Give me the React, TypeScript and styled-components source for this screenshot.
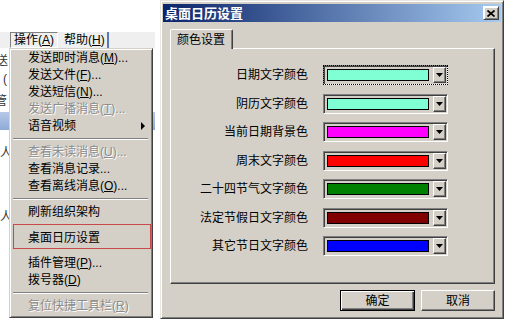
import React from "react";
import styled, { createGlobalStyle, css } from "styled-components";

const GlobalStyle = createGlobalStyle`
  html, body { margin: 0; padding: 0; background: #fff; }
  body {
    width: 521px; height: 334px; overflow: hidden;
    font-family: "Liberation Sans", "Noto Sans CJK SC", sans-serif;
    font-size: 12px; color: #000;
  }
  * { box-sizing: border-box; }
`;

const raised = css`
  border: 1px solid;
  border-color: #d4d0c8 #404040 #404040 #d4d0c8;
  box-shadow: inset 1px 1px #fff, inset -1px -1px #808080;
`;

const Desktop = styled.div`
  position: relative;
  width: 521px;
  height: 334px;
  overflow: hidden;
  background: #fff;
`;

/* ---------- background application (behind the menu) ---------- */
const BackWindow = styled.div`
  position: absolute;
  left: 0;
  top: 32px;
  width: 155px;
  height: 290px;
  display: flex;
  flex-direction: column;
  background: #fff;
  overflow: hidden;
`;

const MenuBar = styled.div`
  height: 16px;
  flex: none;
  display: flex;
  align-items: stretch;
  gap: 2px;
  padding-left: 10px;
  background: #efefef;
`;

const MenuTitle = styled.div<{ $pressed?: boolean; $w: number }>`
  width: ${(p) => p.$w}px;
  display: flex;
  align-items: center;
  padding: 0 3px;
  line-height: 14px;
  white-space: nowrap;
  border: 1px solid transparent;
  ${(p) => p.$pressed && css`border-color: #808080 #fff #fff #808080;`}
`;

const BarDivider = styled.div`
  width: 2px;
  background: #5a78b8;
`;

const BackList = styled.div`
  display: flex;
  flex-direction: column;
`;

const BackRow = styled.div<{ $h: number; $band?: boolean }>`
  height: ${(p) => p.$h}px;
  display: flex;
  align-items: center;
  color: #333;
  white-space: nowrap;
  ${(p) => p.$band && css`background: linear-gradient(#b7c9e8, #8eaad8);`}
`;

const Peek = styled.span<{ $shift: number }>`
  margin-left: ${(p) => p.$shift}px;
`;

/* ---------- popup menu ---------- */
const Menu = styled.div`
  position: absolute;
  left: 9px;
  top: 48px;
  width: 144px;
  height: 270px;
  background: #d4d0c8;
  ${raised};
  padding: 0 1px 3px 1px;
  display: flex;
  flex-direction: column;
`;

const MenuItem = styled.div<{ $disabled?: boolean }>`
  height: 17px;
  flex: none;
  display: flex;
  align-items: center;
  padding-left: 17px;
  white-space: nowrap;
  line-height: 1;
  color: #000;
  ${(p) =>
    p.$disabled &&
    css`
      color: #8c8c8c;
      text-shadow: 1px 1px 0 #fff;
    `}
`;

const SubArrow = styled.span`
  margin-left: auto;
  margin-right: 6px;
  width: 0;
  height: 0;
  border-top: 4px solid transparent;
  border-bottom: 4px solid transparent;
  border-left: 4px solid #000;
`;

const Separator = styled.div`
  height: 9px;
  flex: none;
  display: flex;
  align-items: center;
  padding: 0 3px 0 2px;
  &::before {
    content: "";
    width: 100%;
    border-top: 1px solid #808080;
    border-bottom: 1px solid #fff;
  }
`;

const MarkedSlot = styled.div`
  height: 34px;
  flex: none;
  padding: 4px 0 5px 2px;
  display: flex;
`;

const MarkedItem = styled.div`
  flex: 1;
  display: flex;
  align-items: center;
  padding-left: 14px;
  border: 1px solid #c94848;
  white-space: nowrap;
`;

/* ---------- dialog ---------- */
const Dialog = styled.div`
  position: absolute;
  left: 160px;
  top: 0;
  width: 344px;
  height: 319px;
  background: #d4d0c8;
  ${raised};
  border-color: #e8e6e0 #404040 #404040 #e8e6e0;
  padding: 3px 2px 2px 2px;
  display: flex;
  flex-direction: column;
`;

const TitleBar = styled.div`
  height: 18px;
  flex: none;
  display: flex;
  align-items: center;
  padding: 0 2px;
  background: linear-gradient(to right, #0a246a, #a6caf0);
`;

const TitleText = styled.span`
  color: #fff;
  font-weight: bold;
  font-size: 13px;
  line-height: 1;
`;

const CloseButton = styled.div`
  margin-left: auto;
  width: 16px;
  height: 14px;
  background: #d4d0c8;
  ${raised};
  border-color: #fff #404040 #404040 #fff;
  display: flex;
  align-items: center;
  justify-content: center;
`;

const DialogBody = styled.div`
  flex: 1;
  display: flex;
  flex-direction: column;
  padding: 7px 6px 0 7px;
`;

const TabStrip = styled.div`
  height: 19px;
  flex: none;
  display: flex;
  align-items: flex-start;
`;

const Tab = styled.div`
  position: relative;
  z-index: 1;
  width: 63px;
  height: 20px;
  padding-left: 6px;
  display: flex;
  align-items: center;
  background: #d4d0c8;
  border-top: 1px solid #fff;
  border-left: 1px solid #fff;
  border-right: 1px solid #404040;
  border-radius: 2px 2px 0 0;
  box-shadow: inset -1px 0 #808080;
  line-height: 1;
`;

const Panel = styled.div`
  height: 236px;
  flex: none;
  border: 1px solid;
  border-color: #fff #404040 #404040 #fff;
  box-shadow: inset -1px -1px #808080;
  padding-top: 16px;
`;

const Grid = styled.div`
  display: grid;
  grid-template-columns: 137px 125px;
  column-gap: 15px;
  grid-auto-rows: 20px;
  row-gap: 8.5px;
  align-items: center;
`;

const Label = styled.div`
  text-align: right;
  white-space: nowrap;
  line-height: 1;
`;

const Combo = styled.div<{ $focused?: boolean }>`
  width: 125px;
  height: 20px;
  border: 1px solid;
  border-color: #808080 #fff #fff #808080;
  box-shadow: inset 1px 1px #404040, inset -1px -1px #d4d0c8;
  padding: 1px;
  display: flex;
  align-items: center;
  background: #d4d0c8;
  ${(p) =>
    p.$focused &&
    css`
      outline: 1px dotted #000;
      outline-offset: -1px;
    `}
`;

const Swatch = styled.div<{ $color: string }>`
  flex: 1;
  height: 12px;
  margin-left: 2px;
  border: 1px solid #000;
  background: ${(p) => p.$color};
`;

const DropButton = styled.div`
  width: 13px;
  height: 16px;
  margin-left: 4px;
  background: #d4d0c8;
  border: 1px solid;
  border-color: #fff #404040 #404040 #fff;
  box-shadow: inset -1px -1px #808080;
  display: flex;
  align-items: center;
  justify-content: center;
`;

const ButtonRow = styled.div`
  margin-top: 6px;
  display: flex;
  justify-content: flex-end;
  gap: 6px;
`;

const Button = styled.div<{ $default?: boolean; $w: number }>`
  width: ${(p) => p.$w}px;
  height: 21px;
  display: flex;
  align-items: center;
  justify-content: center;
  line-height: 1;
  background: #d4d0c8;
  ${(p) =>
    p.$default
      ? css`
          border: 1px solid #000;
          box-shadow: inset 1px 1px #fff, inset -1px -1px #404040, inset -2px -2px #808080;
        `
      : css`
          border: 1px solid;
          border-color: #fff #404040 #404040 #fff;
          box-shadow: inset -1px -1px #808080;
        `}
`;

const ArrowDown = () => (
  <svg width="7" height="4" viewBox="0 0 7 4">
    <polygon points="0,0 7,0 3.5,4" fill="#000" />
  </svg>
);

const CloseGlyph = () => (
  <svg width="8" height="7" viewBox="0 0 8 7">
    <path d="M0.5 0.5 L7.5 6.5 M7.5 0.5 L0.5 6.5" stroke="#000" strokeWidth="1.7" />
  </svg>
);

type Entry =
  | { kind: "item"; text: string; key?: string; tail?: string; disabled?: boolean; sub?: boolean }
  | { kind: "sep" }
  | { kind: "marked"; text: string };

const menuEntries: Entry[] = [
  { kind: "item", text: "发送即时消息(", key: "M", tail: ")..." },
  { kind: "item", text: "发送文件(", key: "F", tail: ")..." },
  { kind: "item", text: "发送短信(", key: "N", tail: ")..." },
  { kind: "item", text: "发送广播消息(", key: "T", tail: ")...", disabled: true },
  { kind: "item", text: "语音视频", sub: true },
  { kind: "sep" },
  { kind: "item", text: "查看未读消息(", key: "U", tail: ")...", disabled: true },
  { kind: "item", text: "查看消息记录..." },
  { kind: "item", text: "查看离线消息(", key: "O", tail: ")..." },
  { kind: "sep" },
  { kind: "item", text: "刷新组织架构" },
  { kind: "marked", text: "桌面日历设置" },
  { kind: "item", text: "插件管理(", key: "P", tail: ")..." },
  { kind: "item", text: "拨号器(", key: "D", tail: ")" },
  { kind: "sep" },
  { kind: "item", text: "复位快捷工具栏(", key: "R", tail: ")", disabled: true },
];

const colorRows = [
  { label: "日期文字颜色", color: "#80ffd4" },
  { label: "阴历文字颜色", color: "#80ffd4" },
  { label: "当前日期背景色", color: "#ff00ff" },
  { label: "周末文字颜色", color: "#ff0000" },
  { label: "二十四节气文字颜色", color: "#008000" },
  { label: "法定节假日文字颜色", color: "#800000" },
  { label: "其它节日文字颜色", color: "#0000ff" },
];

export default function App() {
  return (
    <>
      <GlobalStyle />
      <Desktop>
        <BackWindow>
          <MenuBar>
            <MenuTitle $pressed $w={48}>
              操作(<u>A</u>)
            </MenuTitle>
            <MenuTitle $w={45}>
              帮助(<u>H</u>)
            </MenuTitle>
            <BarDivider />
          </MenuBar>
          <BackList>
            <BackRow $h={4} />
            <BackRow $h={14}>
              <Peek $shift={-4}>送</Peek>
            </BackRow>
            <BackRow $h={6} />
            <BackRow $h={14}>
              <Peek $shift={3}>(</Peek>
            </BackRow>
            <BackRow $h={6} />
            <BackRow $h={14}>
              <Peek $shift={-5}>管</Peek>
            </BackRow>
            <BackRow $h={6} />
            <BackRow $h={18} $band />
            <BackRow $h={14} />
            <BackRow $h={14}>
              <Peek $shift={0}>人</Peek>
            </BackRow>
            <BackRow $h={50} />
            <BackRow $h={14}>
              <Peek $shift={0}>人</Peek>
            </BackRow>
          </BackList>
        </BackWindow>

        <Menu>
          {menuEntries.map((e, i) => {
            if (e.kind === "sep") return <Separator key={i} />;
            if (e.kind === "marked")
              return (
                <MarkedSlot key={i}>
                  <MarkedItem>{e.text}</MarkedItem>
                </MarkedSlot>
              );
            return (
              <MenuItem key={i} $disabled={e.disabled}>
                {e.text}
                {e.key && <u>{e.key}</u>}
                {e.tail}
                {e.sub && <SubArrow />}
              </MenuItem>
            );
          })}
        </Menu>

        <Dialog>
          <TitleBar>
            <TitleText>桌面日历设置</TitleText>
            <CloseButton>
              <CloseGlyph />
            </CloseButton>
          </TitleBar>
          <DialogBody>
            <TabStrip>
              <Tab>颜色设置</Tab>
            </TabStrip>
            <Panel>
              <Grid>
                {colorRows.map((r, i) => (
                  <React.Fragment key={r.label}>
                    <Label>{r.label}</Label>
                    <Combo $focused={i === 0}>
                      <Swatch $color={r.color} />
                      <DropButton>
                        <ArrowDown />
                      </DropButton>
                    </Combo>
                  </React.Fragment>
                ))}
              </Grid>
            </Panel>
            <ButtonRow>
              <Button $default $w={75}>确定</Button>
              <Button $w={74}>取消</Button>
            </ButtonRow>
          </DialogBody>
        </Dialog>
      </Desktop>
    </>
  );
}
